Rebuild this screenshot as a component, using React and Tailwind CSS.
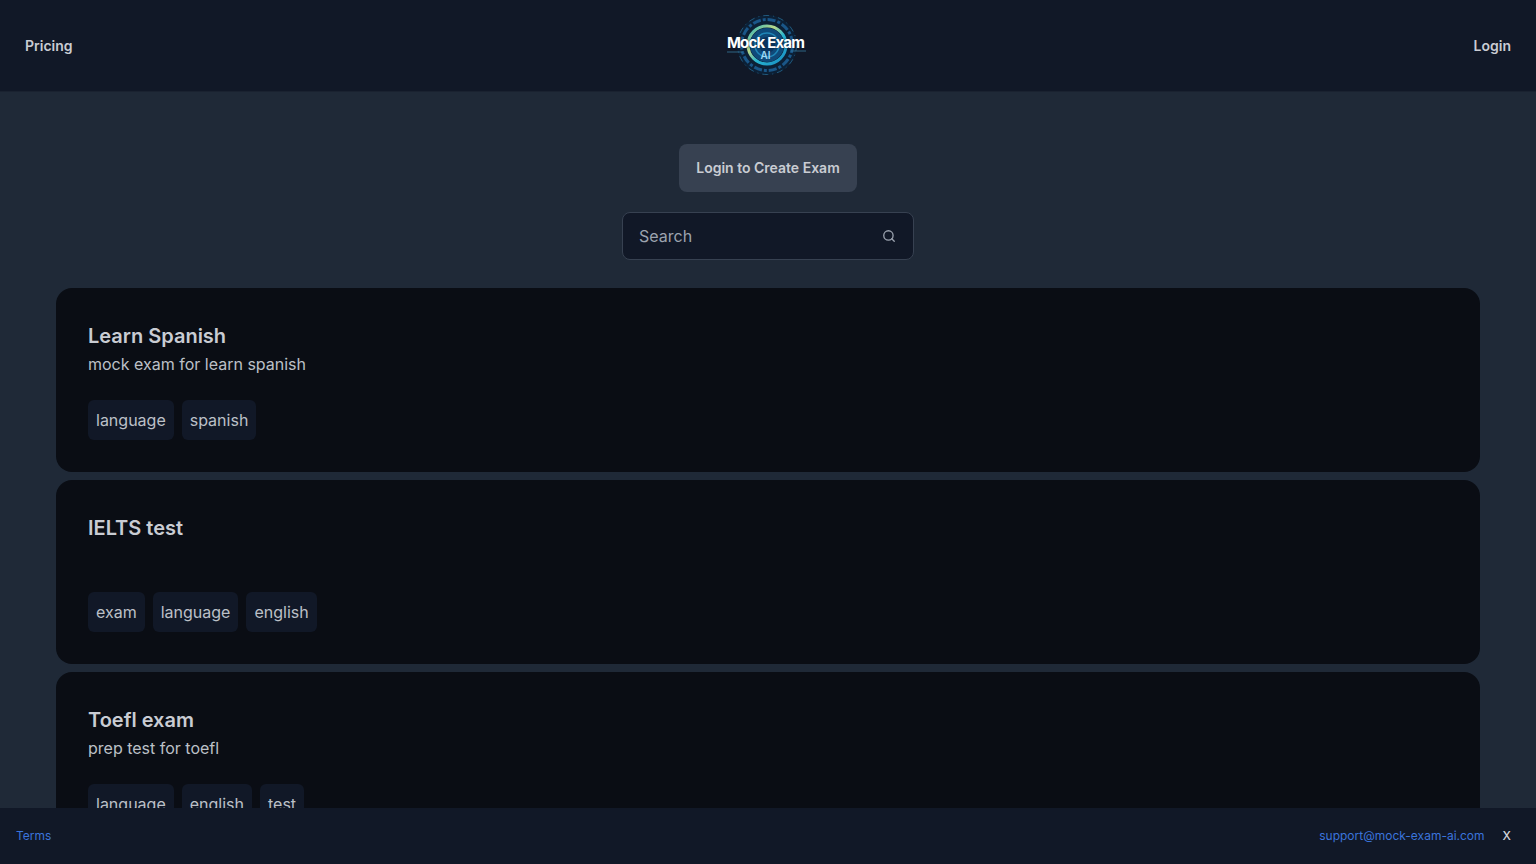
import React from 'react';
import { Search } from 'lucide-react';

const exams = [
  { title: 'Learn Spanish', description: 'mock exam for learn spanish', tags: ['language', 'spanish'] },
  { title: 'IELTS test', description: '', tags: ['exam', 'language', 'english'] },
  { title: 'Toefl exam', description: 'prep test for toefl', tags: ['language', 'english', 'test'] },
];

const Logo = () => (
  <div className="relative w-[80px] h-[64px]">
    <svg width="80" height="64" viewBox="0 0 80 64" fill="none" className="blur-[0.5px]">
      <defs>
        <linearGradient id="ring" x1="22" y1="14" x2="56" y2="50" gradientUnits="userSpaceOnUse">
          <stop offset="0" stopColor="#2fb3b8" />
          <stop offset="0.35" stopColor="#b9d98a" />
          <stop offset="0.6" stopColor="#27b4d0" />
          <stop offset="1" stopColor="#1a8fc4" />
        </linearGradient>
      </defs>
      <circle cx="40" cy="32" r="30" fill="#0c2036" />
      <circle cx="40" cy="32" r="29.5" stroke="#2a6e96" strokeWidth="0.75" strokeDasharray="6 4 1 4" />
      <circle cx="40" cy="32" r="25.5" stroke="#1a5688" strokeWidth="3" strokeDasharray="8 2 3 2" />
      <circle cx="40" cy="32" r="19" stroke="url(#ring)" strokeWidth="3" />
      <circle cx="40" cy="32" r="17" fill="#0f4a7a" />
      <circle cx="40" cy="32" r="12" stroke="#1f86b8" strokeWidth="1.5" />
      <circle cx="40" cy="32" r="8" fill="#0b3560" />
      <path d="M0 39H16M64 38H79" stroke="#3a7ea3" strokeWidth="0.75" />
    </svg>
    <div className="absolute inset-x-0 top-[22px] flex flex-col items-center">
      <span className="whitespace-nowrap text-white text-[15px] leading-[16px] font-bold tracking-[-0.8px] mr-[3px] [text-shadow:0_0_2px_#0b2238]">Mock Exam</span>
      <span className="text-[#9fd8f5] text-[10px] leading-[8px] font-semibold mr-[3px]">AI</span>
    </div>
  </div>
);

const ExamCard = ({ title, description, tags }) => (
  <div className="bg-[#0a0d14] rounded-2xl p-8 shrink-0">
    <h2 className="text-xl leading-8 font-semibold text-[#c9ccd3]">{title}</h2>
    <p className="text-base text-[#bcc0c7] min-h-6">{description}</p>
    <div className="flex gap-2 mt-6">
      {tags.map((tag) => (
        <span key={tag} className="bg-[#111827] text-[#bcc0c7] text-base px-2 py-2 rounded-md">
          {tag}
        </span>
      ))}
    </div>
  </div>
);

export default function App() {
  return (
    <div className="h-screen overflow-hidden bg-[#1f2937] font-['Inter',sans-serif] antialiased relative">
      {/* Header */}
      <header className="h-[92px] bg-[#111827] border-b border-[#1a2230] flex items-center justify-between px-[25px] relative">
        <a className="text-sm font-semibold text-[#c9ccd3]">Pricing</a>
        <div className="absolute left-[727px] top-[13px]">
          <Logo />
        </div>
        <a className="text-sm font-semibold text-[#c9ccd3]">Login</a>
      </header>

      <main className="flex flex-col items-center pt-[52px] px-14">
        <button className="h-12 w-[178px] bg-[#374151] rounded-lg text-sm font-semibold text-[#c9ccd3]">
          Login to Create Exam
        </button>

        <div className="w-[292px] h-12 mt-5 bg-[#111827] border border-[#374151] rounded-lg flex items-center justify-between pl-4 pr-[17px]">
          <span className="text-base text-[#9ca3af]">Search</span>
          <Search size={14} strokeWidth={2.25} className="text-[#9ca3af]" />
        </div>

        <div className="w-full flex flex-col gap-2 mt-7">
          {exams.map((exam) => (
            <ExamCard key={exam.title} {...exam} />
          ))}
        </div>
      </main>

      {/* Cookie / links bar */}
      <footer className="absolute bottom-0 inset-x-0 h-14 bg-[#111827] flex items-center justify-between pl-4 pr-[25px] text-xs">
        <a className="text-[#3b74db]">Terms</a>
        <div className="flex items-center gap-[18px]">
          <a className="text-[#3b74db]">support@mock-exam-ai.com</a>
          <button className="text-xs font-medium text-[#d1d5db]">X</button>
        </div>
      </footer>
    </div>
  );
}
